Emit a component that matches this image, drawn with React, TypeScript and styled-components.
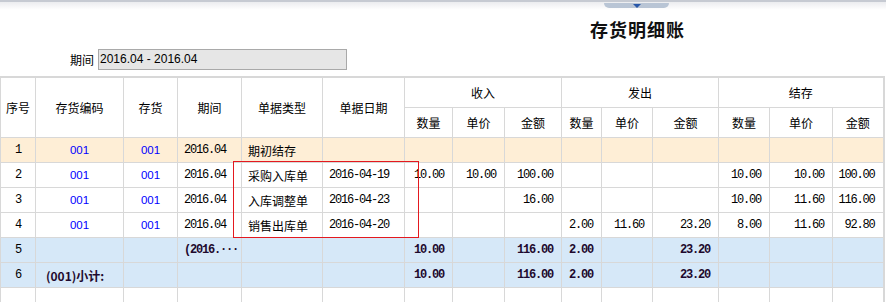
import styled, { createGlobalStyle } from "styled-components";

const GlobalStyle = createGlobalStyle`
  html, body {
    margin: 0;
    padding: 0;
    background: #ffffff;
  }
  body {
    font-family: "Noto Sans CJK SC", "Liberation Sans", sans-serif;
    font-size: 12px;
    color: #000;
    overflow: hidden;
  }
`;

type Row = {
  no: number;
  code?: string;
  item?: string;
  period?: string;
  type?: string;
  date?: string;
  vals: string[];
  kind?: "open" | "total";
  label?: string;
};

const rows: Row[] = [
  { no: 1, code: "001", item: "001", period: "2016.04", type: "期初结存", vals: ["", "", "", "", "", "", "", "", ""], kind: "open" },
  { no: 2, code: "001", item: "001", period: "2016.04", type: "采购入库单", date: "2016-04-19", vals: ["10.00", "10.00", "100.00", "", "", "", "10.00", "10.00", "100.00"] },
  { no: 3, code: "001", item: "001", period: "2016.04", type: "入库调整单", date: "2016-04-23", vals: ["", "", "16.00", "", "", "", "10.00", "11.60", "116.00"] },
  { no: 4, code: "001", item: "001", period: "2016.04", type: "销售出库单", date: "2016-04-20", vals: ["", "", "", "2.00", "11.60", "23.20", "8.00", "11.60", "92.80"] },
  { no: 5, period: "(2016.···", vals: ["10.00", "", "116.00", "2.00", "", "23.20", "", "", ""], kind: "total" },
  { no: 6, label: "(001)小计:", vals: ["10.00", "", "116.00", "2.00", "", "23.20", "", "", ""], kind: "total" },
];

const widths = [35, 88, 54, 64, 81, 82, 48, 52, 57, 40, 51, 66, 51, 63, 51];

const TopBar = styled.div`
  height: 10px;
  border-top: 2px solid #c6cad2;
  box-sizing: border-box;
  background: linear-gradient(#ebecef, #ffffff);
  display: flex;
  padding-left: 604px;
`;

const Handle = styled.div`
  width: 65px;
  height: 5px;
  margin-top: 1px;
  background: #b9c5d5;
  border-radius: 0 0 6px 6px;
  display: flex;
  justify-content: center;
`;

const Arrow = styled.div`
  width: 0;
  height: 0;
  margin-top: 1px;
  border-left: 4px solid transparent;
  border-right: 4px solid transparent;
  border-top: 4px solid #2857a8;
`;

const TitleRow = styled.div`
  display: flex;
  padding: 8px 0 0 590px;
  height: 22px;
`;

const Title = styled.h1`
  margin: 0;
  font-family: "Noto Sans CJK SC", serif;
  font-size: 18px;
  line-height: 22px;
  font-weight: 700;
  letter-spacing: 1px;
  color: #111;
`;

const FilterRow = styled.div`
  display: flex;
  align-items: center;
  margin-top: 9px;
  padding-left: 70px;
  gap: 4px;
`;

const FilterLabel = styled.span`
  font-size: 12px;
  line-height: 21px;
`;

const PeriodBox = styled.div`
  width: 246px;
  height: 19px;
  border: 1px solid #a9a9a9;
  background: #e6e6e6;
  font-family: "Liberation Sans", Arial, sans-serif;
  font-size: 12px;
  line-height: 19px;
  padding-left: 1px;
`;

const TableWrap = styled.div`
  position: relative;
  margin-top: 6px;
`;

const Grid = styled.table`
  border-collapse: collapse;
  table-layout: fixed;
  width: 884px;
  border-top: 2px solid #d8d8d8;
  border-right: 2px solid #d8d8d8;
`;

const HeadCell = styled.th`
  border: 1px solid #d8d8d8;
  font-weight: 400;
  font-size: 12px;
  text-align: center;
  padding: 0;
  height: 29px;
  background: #fff;
`;

const BodyRow = styled.tr<{ $kind?: "open" | "total" }>`
  height: 25px;
  background: ${(p) => (p.$kind === "open" ? "#feeed6" : p.$kind === "total" ? "#d6e8f8" : "#ffffff")};
  color: ${(p) => (p.$kind === "total" ? "#1e0a2e" : "#000")};
  font-weight: ${(p) => (p.$kind === "total" ? 700 : 400)};
`;

const Cell = styled.td<{ $align?: "left" | "center" | "right"; $mono?: boolean; $blue?: boolean; $plain?: boolean }>`
  border: 1px solid #d8d8d8;
  padding: 0 ${(p) => (p.$align === "right" ? "8px" : "0")} 0 ${(p) => (p.$align === "left" ? "6px" : "0")};
  text-align: ${(p) => p.$align ?? "center"};
  white-space: nowrap;
  overflow: visible;
  font-family: ${(p) =>
    p.$mono ? `"Liberation Mono", "Noto Sans CJK SC", monospace` : `"Liberation Sans", "Noto Sans CJK SC", sans-serif`};
  font-size: ${(p) => (p.$mono ? "12px" : "12px")};
  letter-spacing: ${(p) => (p.$mono ? "-1.2px" : "0")};
  color: ${(p) => (p.$blue ? "#0000ff" : p.$plain ? "#000" : "inherit")};
  font-weight: ${(p) => (p.$plain ? 400 : "inherit")};
`;

const CodeText = styled.span`
  font-size: 11.5px;
`;

const CjkText = styled.span`
  font-family: "Noto Sans CJK SC", sans-serif;
  font-size: 12px;
  letter-spacing: 0;
`;

const Highlight = styled.div`
  position: absolute;
  left: 233px;
  top: 85px;
  width: 184px;
  height: 75px;
  border: 1px solid #e4191f;
  pointer-events: none;
`;

const topHeads = ["序号", "存货编码", "存货", "期间", "单据类型", "单据日期"];
const groups = ["收入", "发出", "结存"];
const subHeads = ["数量", "单价", "金额"];

export default function App() {
  return (
    <>
      <GlobalStyle />
      <TopBar>
        <Handle>
          <Arrow />
        </Handle>
      </TopBar>
      <TitleRow>
        <Title>存货明细账</Title>
      </TitleRow>
      <FilterRow>
        <FilterLabel>期间</FilterLabel>
        <PeriodBox>2016.04 - 2016.04</PeriodBox>
      </FilterRow>
      <TableWrap>
        <Grid>
          <colgroup>
            {widths.map((w, i) => (
              <col key={i} style={{ width: w }} />
            ))}
          </colgroup>
          <thead>
            <tr>
              {topHeads.map((h) => (
                <HeadCell key={h} rowSpan={2}>
                  {h}
                </HeadCell>
              ))}
              {groups.map((g) => (
                <HeadCell key={g} colSpan={3}>
                  {g}
                </HeadCell>
              ))}
            </tr>
            <tr>
              {groups.map((g) =>
                subHeads.map((s) => <HeadCell key={g + s}>{s}</HeadCell>)
              )}
            </tr>
          </thead>
          <tbody>
            {rows.map((r) => (
              <BodyRow key={r.no} $kind={r.kind}>
                <Cell $mono $plain>
                  {r.no}
                </Cell>
                {r.label ? (
                  <Cell $align="left" style={{ paddingLeft: 10 }}>
                    <CjkText>{r.label}</CjkText>
                  </Cell>
                ) : (
                  <Cell $blue>
                    <CodeText>{r.code}</CodeText>
                  </Cell>
                )}
                <Cell $blue>
                  <CodeText>{r.item}</CodeText>
                </Cell>
                <Cell $mono $align="left">
                  {r.period}
                </Cell>
                <Cell $align="left">
                  <CjkText>{r.type}</CjkText>
                </Cell>
                <Cell $mono $align="left">
                  {r.date}
                </Cell>
                {r.vals.map((v, i) => (
                  <Cell key={i} $mono $align="right">
                    {v}
                  </Cell>
                ))}
              </BodyRow>
            ))}
            <BodyRow>
              {widths.map((_, i) => (
                <Cell key={i} />
              ))}
            </BodyRow>
          </tbody>
        </Grid>
        <Highlight />
      </TableWrap>
    </>
  );
}
